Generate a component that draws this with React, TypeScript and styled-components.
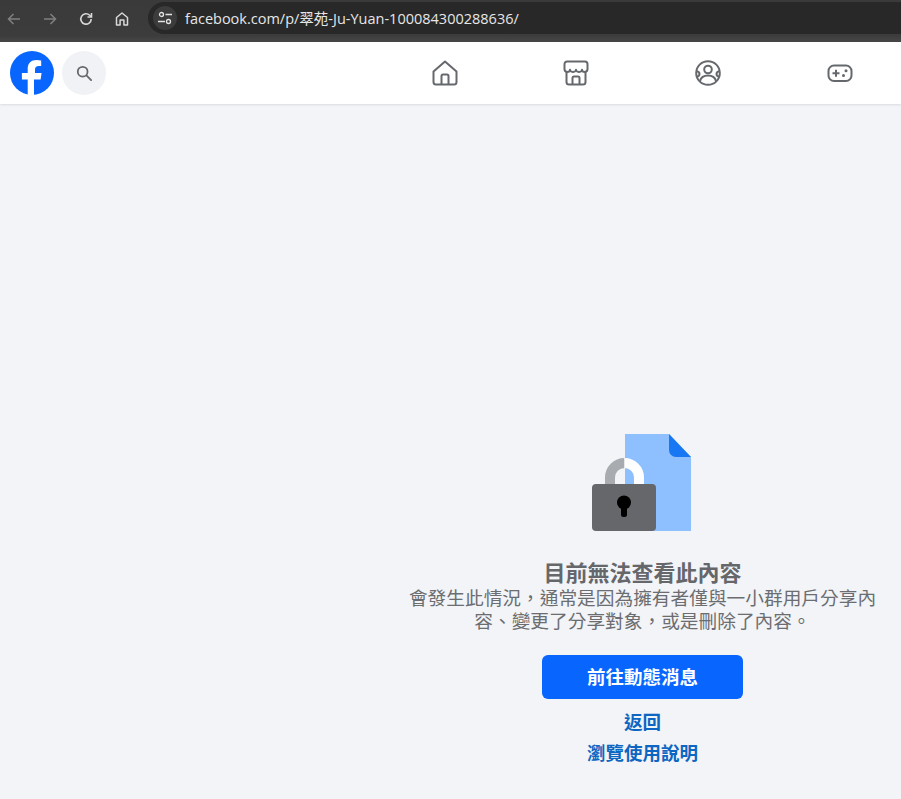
import styled, { createGlobalStyle } from "styled-components";

const GlobalStyle = createGlobalStyle`
    html, body {
        margin: 0;
        padding: 0;
        background: #f2f4f7;
        overflow: hidden;
    }
`

const Page = styled.div`
    display: flex;
    flex-direction: column;
    width: 901px;
    height: 799px;
    font-family: "Liberation Sans", "Noto Sans CJK TC", sans-serif;
    background: #f2f4f7;
    overflow: hidden;
`

const BrowserBar = styled.div`
    display: flex;
    align-items: center;
    height: 42px;
    flex-shrink: 0;
    padding-left: 5px;
    background: linear-gradient(#3a3a3a, #3c3c3c 85%, #474747);
    box-sizing: border-box;
`
const NavButton = styled.div<{ $dim?: boolean }>`
    display: flex;
    align-items: center;
    justify-content: center;
    width: 18px;
    height: 18px;
    margin-right: 18px;
    margin-top: -4px;
    color: ${(p) => (p.$dim ? "#808080" : "#d8d8d8")};
`
const AddressBar = styled.div`
    display: flex;
    align-items: center;
    flex: 1;
    height: 32px;
    margin-top: -7px;
    margin-left: -1px;
    padding-left: 5px;
    border-radius: 16px 0 0 16px;
    background: #282828;
`
const SiteInfo = styled.div`
    display: flex;
    align-items: center;
    justify-content: center;
    width: 24px;
    height: 24px;
    border-radius: 50%;
    background: #3c3c3c;
    color: #e3e3e3;
`
const Url = styled.span`
    margin-left: 8px;
    font-family: "Open Sans", "Noto Sans CJK TC", sans-serif;
    font-size: 14.5px;
    color: #e6e6e6;
`

const Header = styled.header`
    display: flex;
    align-items: center;
    height: 62px;
    flex-shrink: 0;
    background: #fff;
    box-shadow: 0 1px 2px rgba(0, 0, 0, 0.1);
`
const Logo = styled.div`
    display: flex;
    flex-shrink: 0;
    margin-left: 10px;
`
const SearchButton = styled.div`
    display: flex;
    align-items: center;
    justify-content: center;
    flex-shrink: 0;
    width: 44px;
    height: 44px;
    margin-left: 8px;
    border-radius: 50%;
    background: #f0f2f5;
    color: #65676b;
`
const Tabs = styled.nav`
    display: flex;
    flex-shrink: 0;
    margin-left: 273px;
`
const Tab = styled.div`
    display: flex;
    align-items: center;
    justify-content: center;
    width: 131.67px;
    color: #65686c;
`

const Main = styled.main`
    display: flex;
    flex-direction: column;
    align-items: center;
    width: 465px;
    margin-left: 410px;
    padding-top: 330px;
`
const Illustration = styled.svg`
    display: block;
`
const Title = styled.h2`
    margin: 29px 0 0;
    font-size: 22px;
    line-height: 27px;
    font-weight: 700;
    color: #65676b;
`
const Message = styled.p`
    margin: 0;
    width: 470px;
    flex-shrink: 0;
    font-size: 18.7px;
    line-height: 23px;
    text-align: center;
    color: #6b6d71;
`
const PrimaryButton = styled.div`
    display: flex;
    align-items: center;
    justify-content: center;
    box-sizing: border-box;
    width: 201px;
    height: 44px;
    margin-top: 22px;
    margin-bottom: 3px;
    padding-bottom: 3px;
    border-radius: 6px;
    background: #0866ff;
    color: #fff;
    font-size: 18.5px;
    font-weight: 700;
`
const TextLink = styled.a`
    margin-top: 11px;
    line-height: 20px;
    font-size: 18.5px;
    font-weight: 700;
    color: #0d66c2;
`

const App = () => {
    return (
        <Page>
            <GlobalStyle />
            <BrowserBar>
                <NavButton $dim>
                    <svg width="16" height="16" viewBox="0 0 16 16" fill="none" stroke="currentColor" strokeWidth="1.5"><path d="M14 8H2.500M7.500 3 2.500 8l5 5" /></svg>
                </NavButton>
                <NavButton $dim>
                    <svg width="16" height="16" viewBox="0 0 16 16" fill="none" stroke="currentColor" strokeWidth="1.5"><path d="M2 8h11.500M8.500 3l5 5-5 5" /></svg>
                </NavButton>
                <NavButton>
                    <svg width="16" height="16" viewBox="0 0 16 16" fill="none" stroke="currentColor" strokeWidth="1.6"><path d="M13.2 8a5.2 5.2 0 1 1-1.5-3.7L13.5 6" /><path d="M13.5 2v4h-4" /></svg>
                </NavButton>
                <NavButton>
                    <svg width="16" height="16" viewBox="0 0 16 16" fill="none" stroke="currentColor" strokeWidth="1.5"><path d="M2.500 14V6.500L8 2l5.500 4.500V14h-3.600V9H6.100v5z" strokeLinejoin="round" /></svg>
                </NavButton>
                <AddressBar>
                    <SiteInfo>
                        <svg width="16" height="16" viewBox="0 0 16 16" fill="none" stroke="currentColor" strokeWidth="1.3"><circle cx="4.5" cy="4.5" r="2" /><path d="M8.500 4.500H15M1 11.500h7" /><circle cx="11.5" cy="11.5" r="2" /></svg>
                    </SiteInfo>
                    <Url>facebook.com/p/翠苑-Ju-Yuan-100084300288636/</Url>
                </AddressBar>
            </BrowserBar>
            <Header>
                <Logo>
                    <svg width="44" height="44" viewBox="0 0 44 44">
                        <circle cx="22" cy="22" r="22" fill="#0866ff" />
                        <path fill="#fff" d="M30.600 28.400 31.600 22H25v-3.200c0-2.100 1-3.700 3.900-3.700h2.300V9.500c-1.300-.2-3-.4-4.700-.4-5.300 0-8.800 3.200-8.800 8.600V22h-5.800v6.400h5.800V44h6.300V28.400z" />
                    </svg>
                </Logo>
                <SearchButton>
                    <svg width="16" height="16" viewBox="0 0 18 18" fill="none" stroke="currentColor" strokeWidth="2"><circle cx="7.5" cy="7.5" r="5.5" /><path d="m12 12 5 5" strokeLinecap="round" /></svg>
                </SearchButton>
                <Tabs>
                    <Tab>
                        <svg width="26" height="26" viewBox="0 0 26 26" fill="none" stroke="currentColor" strokeWidth="2" strokeLinejoin="round"><path d="M1.500 11.500 13 1.500l11.500 10V22a2.500 2.500 0 0 1-2.500 2.500H4A2.500 2.500 0 0 1 1.500 22z" /><path d="M9.500 24.500V16a1.500 1.500 0 0 1 1.500-1.500h4a1.500 1.500 0 0 1 1.500 1.500v8.500" /></svg>
                    </Tab>
                    <Tab>
                        <svg width="26" height="26" viewBox="0 0 26 26" fill="none" stroke="currentColor" strokeWidth="2" strokeLinejoin="round"><path d="M4 1.500h18a2.500 2.500 0 0 1 2.500 2.500v5a3 3 0 0 1-2.500 3c-1.500 0-3-.8-3-2.200 0 1.400-2 2.200-3 2.200s-3-.8-3-2.200c0 1.400-2 2.200-3 2.200s-3-.8-3-2.200c0 1.400-1.500 2.200-3 2.200a3 3 0 0 1-2.500-3V4A2.500 2.500 0 0 1 4 1.500z" /><path d="M3.500 12v10A2.500 2.500 0 0 0 6 24.500h14a2.500 2.500 0 0 0 2.500-2.500V12" /><path d="M9.500 24.500V18a1.500 1.500 0 0 1 1.500-1.500h4a1.500 1.500 0 0 1 1.500 1.500v6.500" /></svg>
                    </Tab>
                    <Tab>
                        <svg width="26" height="26" viewBox="0 0 26 26" fill="none" stroke="currentColor" strokeWidth="2"><circle cx="13" cy="13" r="11.800" /><circle cx="13" cy="9.500" r="3.800" /><path d="M5 21c1-4 4.500-5.500 8-5.500s7 1.500 8 5.500" /><path d="M1.500 11c1.800.500 3 1.500 3 3s-1 2.500-3 3M24.500 11c-1.800.500-3 1.500-3 3s1 2.500 3 3" /></svg>
                    </Tab>
                    <Tab>
                        <svg width="26" height="26" viewBox="0 0 26 26" fill="none" stroke="currentColor" strokeWidth="2"><rect x="1.500" y="5.500" width="23" height="15.500" rx="5.500" /><path d="M5.500 13.200h7M9 9.700v7" /><circle cx="19" cy="10.800" r="1.500" fill="currentColor" stroke="none" /><circle cx="16.500" cy="15.500" r="1.500" fill="currentColor" stroke="none" /></svg>
                    </Tab>
                </Tabs>
            </Header>
            <Main>
                <Illustration width="112" height="97" viewBox="0 0 112 97">
                    <path fill="#8ec0ff" d="M38 0h44l22 23v74H38z" />
                    <path fill="#1877f2" d="M82 0l22 23H89a7 7 0 0 1-7-7z" />
                    <path fill="none" stroke="#a8abaf" strokeWidth="10" d="M37.500 29a14.500 14.500 0 0 0-14.500 14.500V52" />
                    <path fill="none" stroke="#fff" strokeWidth="10" d="M37.500 29a14.500 14.500 0 0 1 14.500 14.500V52" />
                    <rect x="5" y="50" width="64" height="47" rx="4" fill="#65676b" />
                    <circle cx="37" cy="68.500" r="7" fill="#000" />
                    <rect x="34" y="69" width="6" height="14" rx="2.500" fill="#000" />
                </Illustration>
                <Title>目前無法查看此內容</Title>
                <Message>會發生此情況，通常是因為擁有者僅與一小群用戶分享內容、變更了分享對象，或是刪除了內容。</Message>
                <PrimaryButton>前往動態消息</PrimaryButton>
                <TextLink>返回</TextLink>
                <TextLink>瀏覽使用說明</TextLink>
            </Main>
        </Page>
    )
}

export default App
